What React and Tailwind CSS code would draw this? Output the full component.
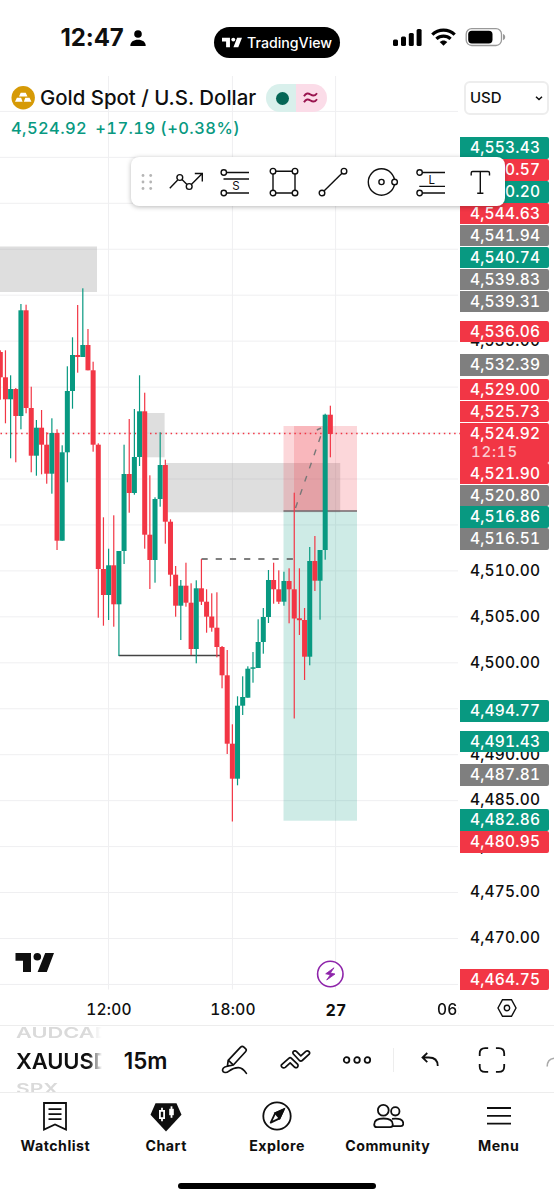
const GREEN = '#089981';
const RED = '#f23645';

// [bodyTop, bodyBottom, high, low, direction]
const candles = [
  [352, 377.3, 350.3, 399.7, 'd'],
  [377.3, 399.3, 350.3, 423.3, 'd'],
  [389, 399.3, 375.3, 458.3, 'u'],
  [389, 416, 388, 462.3, 'd'],
  [310.3, 416, 304, 429.3, 'u'],
  [310.3, 408, 304.7, 413.3, 'd'],
  [408, 455.7, 386.7, 472.3, 'd'],
  [427.7, 455.7, 420, 475.7, 'u'],
  [427.7, 444.7, 410, 474.3, 'd'],
  [444.7, 473.7, 432.3, 483.7, 'd'],
  [433, 473.7, 418.3, 493.7, 'u'],
  [433, 540.7, 429.3, 550, 'd'],
  [452.3, 540.7, 445.3, 540.7, 'u'],
  [391, 452.3, 366.3, 482.3, 'u'],
  [355, 391, 337.3, 408.7, 'u'],
  [355, 357, 305, 372.7, 'd'],
  [345, 357, 288.3, 357, 'u'],
  [345, 370.3, 329, 370.3, 'd'],
  [370.3, 444.7, 361.7, 451.7, 'd'],
  [444.7, 569, 443.3, 617.7, 'd'],
  [569, 595, 517.3, 625.7, 'd'],
  [565.3, 595, 548.7, 620, 'u'],
  [565.3, 604.3, 515.3, 626.7, 'd'],
  [551, 604.3, 551, 656, 'u'],
  [474, 551, 444.7, 564, 'u'],
  [474, 493, 419, 512.7, 'd'],
  [457, 493, 409, 494.7, 'u'],
  [411.3, 457, 375.3, 466, 'u'],
  [411.3, 534.7, 392.7, 548.7, 'd'],
  [534.7, 560, 475.3, 589, 'd'],
  [499, 560, 497.3, 582.7, 'u'],
  [465, 499, 432.3, 506.7, 'u'],
  [465, 521.7, 459.7, 543.7, 'd'],
  [521.7, 574.7, 519.3, 586.3, 'd'],
  [574.7, 605.7, 566, 616.7, 'd'],
  [585.7, 605.7, 580, 640, 'u'],
  [585.7, 602.7, 562.7, 606.7, 'd'],
  [602.7, 649, 583.3, 655, 'd'],
  [588.3, 649, 580.3, 663.3, 'u'],
  [588.3, 601.7, 559, 605, 'd'],
  [601.7, 616.7, 589.3, 632.7, 'd'],
  [616.5, 627.7, 593.3, 631.7, 'd'],
  [627.7, 647, 592.3, 657.3, 'd'],
  [647, 675.3, 646, 688.3, 'd'],
  [675.3, 743.7, 650, 754, 'd'],
  [743.7, 778.7, 724.3, 821.5, 'd'],
  [705.7, 778.7, 696.3, 785.3, 'u'],
  [697, 705.7, 676.3, 715, 'u'],
  [668.7, 697.7, 666.3, 697.7, 'u'],
  [667.3, 668.8, 652, 682.7, 'u'],
  [642, 668, 619.3, 668, 'u'],
  [617, 642, 608, 653.7, 'u'],
  [580, 617, 570, 623, 'u'],
  [580, 589.3, 562.7, 603.7, 'd'],
  [589.3, 601.7, 570.3, 604, 'd'],
  [581, 601.7, 571.7, 605.7, 'u'],
  [581, 589.3, 568.3, 623.3, 'd'],
  [589.3, 618.5, 492.7, 718.5, 'd'],
  [618.3, 620.2, 568.3, 635, 'd'],
  [620, 656.7, 608, 680, 'd'],
  [561, 656.7, 547, 665.3, 'u'],
  [561, 580.7, 536, 591, 'd'],
  [550, 580.7, 550, 619.7, 'u'],
  [414.7, 550, 413.7, 559.7, 'u'],
  [414.7, 434, 405.7, 457.3, 'd'],
];

const candleX = (i) => 108.6 + (i - 21) * 5.157;

const gridRows = Array.from({ length: 20 }, (_, i) => 111.4 + i * 45.95);

const scaleLabels = [
  ['4,535.00', 341],
  ['4,510.00', 570.5],
  ['4,505.00', 616.5],
  ['4,500.00', 662.5],
  ['4,490.00', 754.5],
  ['4,485.00', 800],
  ['4,480.00', 846],
  ['4,475.00', 892],
  ['4,470.00', 938],
];

const priceTags = [
  ['4,553.43', 148, 'bg-[#089981]'],
  ['4,550.57', 170, 'bg-[#f23645]'],
  ['4,550.20', 192, 'bg-[#089981]'],
  ['4,544.63', 213.8, 'bg-[#f23645]'],
  ['4,541.94', 235.7, 'bg-[#7f7f7f]'],
  ['4,540.74', 257.6, 'bg-[#089981]'],
  ['4,539.83', 279.5, 'bg-[#7f7f7f]'],
  ['4,539.31', 301.4, 'bg-[#7f7f7f]'],
  ['4,536.06', 331.5, 'bg-[#f23645]'],
  ['4,532.39', 365, 'bg-[#7f7f7f]'],
  ['4,529.00', 389.8, 'bg-[#f23645]'],
  ['4,525.73', 411.7, 'bg-[#f23645]'],
  ['4,521.90', 473.6, 'bg-[#f23645]'],
  ['4,520.80', 495.4, 'bg-[#7f7f7f]'],
  ['4,516.86', 517.3, 'bg-[#089981]'],
  ['4,516.51', 539.2, 'bg-[#7f7f7f]'],
  ['4,494.77', 711, 'bg-[#089981]'],
  ['4,491.43', 741.8, 'bg-[#089981]'],
  ['4,487.81', 775, 'bg-[#7f7f7f]'],
  ['4,482.86', 820.3, 'bg-[#089981]'],
  ['4,480.95', 842.2, 'bg-[#f23645]'],
  ['4,464.75', 979.5, 'bg-[#f23645]'],
];

// the chart area starts right below the status bar
const CHART_TOP = 76;

function StatusBar() {
  return (
    <header className="flex h-[76px] items-start">
      <div className="ml-[60.500px] mt-[22px] flex h-8 w-[153.500px] items-center gap-[6px]">
        <span className="text-[24px] font-bold leading-8 tracking-[-0.1px]">12:47</span>
        <svg className="mt-[-1px] h-4 w-4" viewBox="0 0 16 16">
          <circle cx="8" cy="4" r="3.800" />
          <path d="M.3 16c0-4.200 3.200-6.300 7.700-6.300s7.700 2.100 7.700 6.300z" />
        </svg>
      </div>
      <div className="mt-[27px] flex h-[31px] w-[126px] items-center rounded-full bg-black pl-2 text-white">
        <svg className="h-[11px] w-5" viewBox="0 0 39 19" fill="currentColor">
          <path d="M0 0h15.500v19H8V7.500H0zM29.500 0H39l-7.300 19h-9.400z" />
          <circle cx="22" cy="3.800" r="3.800" />
        </svg>
        <span className="ml-[5px] whitespace-nowrap text-[14.2px] font-medium">TradingView</span>
      </div>
      <div className="ml-[53px] mt-[27px] flex h-5 items-center gap-[9px]">
        <svg className="h-[18px] w-[29px]" viewBox="0 0 29 18">
          <rect x="0" y="11.500" width="5" height="6.500" rx="1.500" />
          <rect x="8" y="8.500" width="5" height="9.500" rx="1.500" />
          <rect x="15.800" y="5" width="5" height="13" rx="1.500" />
          <rect x="23.600" y="1" width="5" height="17" rx="1.500" />
        </svg>
        <svg className="h-[18px] w-[25px]" viewBox="0 0 25 18" fill="none" stroke="#000" strokeWidth="3.200">
          <path d="M1.300 6.700C7.500.6 17.500.6 23.700 6.700" />
          <path d="M5.400 10.900c4-3.800 10.200-3.800 14.200 0" />
          <path d="M8.700 14c2.200-2.100 5.400-2.100 7.600 0l-3.800 3.800z" fill="#000" stroke="none" />
        </svg>
        <svg className="h-[20px] w-[41px]" viewBox="0 0 41 20">
          <rect x="1.200" y="1.700" width="35.300" height="16.800" rx="5.500" fill="none" stroke="#999" strokeWidth="1.300" />
          <rect x="3.200" y="3.700" width="24.300" height="12.800" rx="3.700" />
          <path d="M38 7v6.200c1.600-.5 2.200-1.700 2.200-3.100S39.600 7.500 38 7z" fill="#999" />
        </svg>
      </div>
    </header>
  );
}

function Plot() {
  return (
    <svg className="block h-[914px] w-[460px]" viewBox="0 76 460 914">
      <g stroke="#efeff1" strokeWidth="1">
        {gridRows.map((y) => (
          <line key={y} x1="0" x2="458" y1={y} y2={y} />
        ))}
        {[108.5, 232.4, 335.6].map((x) => (
          <line key={x} x1={x} x2={x} y1="76" y2="989.500" />
        ))}
      </g>

      {/* supply zones */}
      <g fill="#808080" fillOpacity="0.26">
        <rect x="0" y="246.500" width="97" height="45.500" />
        <rect x="144" y="413" width="20.600" height="44.300" />
        <rect x="165.500" y="463" width="174.700" height="49.300" />
      </g>

      {/* short position */}
      <rect x="283.500" y="426" width="73.500" height="85" fill={RED} fillOpacity="0.2" />
      <rect x="294" y="426" width="31" height="85" fill={RED} fillOpacity="0.2" />
      <rect x="283.500" y="511" width="73.500" height="309.700" fill={GREEN} fillOpacity="0.2" />
      <line x1="283.500" x2="357" y1="511" y2="511" stroke="#75686c" strokeWidth="1.300" />
      <path d="M295.500 508L322.500 431" stroke="#777" strokeWidth="1.400" strokeDasharray="6 8" fill="none" />
      <path d="M316.800 430L321 428" stroke="#777" strokeWidth="1.400" />

      <line x1="118.800" x2="222" y1="655.500" y2="655.500" stroke="#444" strokeWidth="1.300" />
      <line x1="201.500" x2="294" y1="559" y2="559" stroke="#555" strokeWidth="1.500" strokeDasharray="6.200 8" />
      <line x1="0.500" x2="460" y1="433.500" y2="433.500" stroke={RED} strokeWidth="1.500" strokeDasharray="1.500 3.655" />

      {candles.map(([top, bottom, high, low, dir], i) => {
        const color = dir === 'u' ? GREEN : RED;
        return (
          <g key={i} fill={color}>
            <rect x={candleX(i) - 0.6} y={high} width="1.200" height={low - high} />
            <rect x={candleX(i) - 2.5} y={top} width="5" height={bottom - top} />
          </g>
        );
      })}

      <g fill="#0f0f0f">
        <path d="M15.500 953H31v19h-8v-11.300h-7.500zM45.200 953H54l-7.200 19h-9.200z" />
        <circle cx="37.300" cy="956.700" r="3.800" />
      </g>

      <circle cx="330.300" cy="974" r="12.700" fill="#fff" stroke="#8e24aa" strokeWidth="1.600" />
      <path d="M334 967.800L325.700 973.800l4.600 1-3.600 5.200 8.300-6-4.600-1z" fill="#8e24aa" stroke="#8e24aa" strokeWidth=".8" strokeLinejoin="round" />
    </svg>
  );
}

function PriceScale() {
  return (
    <div className="relative w-[94px] overflow-hidden text-[15.5px] font-medium tabular-nums leading-[22px] tracking-[0.2px]">
      <button className="absolute left-1 top-[5px] flex h-[34px] w-[85px] items-center justify-between rounded-md border-2 border-[#ededed] bg-white pl-1 pr-[4px] text-[15px] tracking-normal">
        USD
        <svg className="h-2 w-2" viewBox="0 0 8 8" fill="none" stroke="#0f0f0f" strokeWidth="1.500">
          <path d="M1 2.800l3 2.700 3-2.700" />
        </svg>
      </button>
      {scaleLabels.map(([text, y]) => (
        <div key={text} className="absolute left-[10px] whitespace-nowrap" style={{ top: y - 11 - CHART_TOP }}>
          {text}
        </div>
      ))}
      {priceTags.map(([text, y, bg]) => (
        <div
          key={text}
          className={`absolute left-0 h-[21.500px] w-[88.500px] rounded-r-[2px] pl-[10px] text-white ${bg}`}
          style={{ top: y - 10.9 - CHART_TOP }}
        >
          {text}
        </div>
      ))}
      <div className="absolute left-0 top-[346.600px] h-[40px] w-[88.500px] rounded-r-[2px] bg-[#f23645] pl-[10px] text-white">
        <div>4,524.92</div>
        <div className="-mt-[4px] pl-[1px] text-[15px] tracking-[0.8px] text-white/75">12:15</div>
      </div>
    </div>
  );
}

function Legend() {
  return (
    <div className="absolute left-[11px] top-[8px]">
      <div className="flex h-[28px] items-center">
        <svg className="h-6 w-6" viewBox="0 0 24 24">
          <circle cx="12.200" cy="11.800" r="11.700" fill="#d69a06" />
          <path d="M9.700 6.700h5l1.800 3.800H8zM5.900 11.800h4.200l1.500 4H4zM14.300 11.800h4.200l1.900 4h-7.600z" fill="#fff" />
        </svg>
        <h1 className="ml-[5px] w-[226px] whitespace-nowrap text-[20.4px] font-medium leading-7">
          Gold Spot / U.S. Dollar
        </h1>
        <div className="flex h-7 w-[61px] overflow-hidden rounded-full">
          <div className="flex w-[30px] items-center justify-center bg-[#d9f0ec]">
            <span className="ml-[2px] h-[13px] w-[13px] rounded-full bg-[#056656]" />
          </div>
          <div className="flex w-[31px] items-center justify-center bg-[#fbdce8]">
            <svg className="-ml-[2px] h-3 w-[15px]" viewBox="0 0 15 12" fill="none" stroke="#99154f" strokeWidth="1.900">
              <path d="M1 4.300C3 .8 5.200 1 7.500 2.500S12 4.200 14 1.200" />
              <path d="M1 10.300c2-3.500 4.200-3.300 6.500-1.800s4.500 1.700 6.500-1.300" />
            </svg>
          </div>
        </div>
      </div>
      <div className="mt-[5px] flex gap-2 whitespace-nowrap text-[16.5px] font-medium tabular-nums leading-[22px] tracking-[0.4px] text-[#089981]">
        <span>4,524.92</span>
        <span>+17.19 (+0.38%)</span>
      </div>
    </div>
  );
}

function Tool({ children }) {
  return (
    <button className="flex w-[49px] items-center justify-center">
      <svg className="-ml-px h-[34px] w-[34px]" viewBox="0 0 34 34" fill="none" stroke="#0f0f0f" strokeWidth="1.400">
        {children}
      </svg>
    </button>
  );
}

function DrawingToolbar() {
  return (
    <div className="absolute left-[131px] top-[81px] flex h-[49px] w-[374px] rounded-lg bg-white shadow-[0_1px_5px_rgba(0,0,0,0.28)]">
      <div className="flex w-[31px] items-center justify-center">
        <svg className="h-4 w-3" viewBox="0 0 12 16" fill="#b5b5b5">
          {[1.5, 8, 14.5].map((y) => (
            <g key={y}>
              <circle cx="2" cy={y} r="1.400" />
              <circle cx="9.700" cy={y} r="1.400" />
            </g>
          ))}
        </svg>
      </div>
      <Tool>
        <path d="M.8 23.200l7.900-8.300M13 14.500l5 5M22.300 19.400L33 8.800M25.800 8.500h7.500V16.500" />
        <circle cx="10.800" cy="12.500" r="2.900" />
        <circle cx="20.200" cy="21.500" r="2.900" />
      </Tool>
      <Tool>
        <circle cx="5.800" cy="7.500" r="2.700" />
        <circle cx="5.800" cy="28" r="2.700" />
        <path d="M8.500 7.500H31M5.500 14H31M8.500 28H31" />
        <text x="18" y="25" textAnchor="middle" fontSize="11.500" fill="#0f0f0f" stroke="none">S</text>
      </Tool>
      <Tool>
        <circle cx="6" cy="6.200" r="2.800" />
        <circle cx="28" cy="6.200" r="2.800" />
        <circle cx="6" cy="28" r="2.800" />
        <circle cx="28" cy="28" r="2.800" />
        <path d="M8.800 6.200h16.400M8.800 28h16.400M6 9v16.200M28 9v16.200" />
      </Tool>
      <Tool>
        <circle cx="6" cy="28" r="2.800" />
        <circle cx="28" cy="6.200" r="2.800" />
        <path d="M8 26L26 8.200" />
      </Tool>
      <Tool>
        <circle cx="16.500" cy="17" r="13.200" />
        <circle cx="16.500" cy="17" r="2.600" />
        <circle cx="29.600" cy="17" r="2.800" fill="#fff" />
      </Tool>
      <Tool>
        <circle cx="5.600" cy="7.500" r="2.700" />
        <circle cx="5.600" cy="28" r="2.700" />
        <path d="M8.300 7.500H31M5.300 21.400H31M8.300 28H31" />
        <text x="17.800" y="18.700" textAnchor="middle" fontSize="11.500" fill="#0f0f0f" stroke="none">L</text>
      </Tool>
      <Tool>
        <path d="M8.200 10.500V8q0-1.500 1.500-1.500h15.300q1.500 0 1.500 1.500v2.500M17.300 6.500v21.800M14.200 28.300h6.200" />
      </Tool>
    </div>
  );
}

function TimeScale() {
  return (
    <div className="flex h-9 items-center border-b border-[#ededed] text-[15.5px] font-medium tabular-nums leading-5 tracking-[0.2px]">
      <span className="ml-[69px] mt-[4px] w-20 text-center">12:00</span>
      <span className="ml-[44px] mt-[4px] w-20 text-center">18:00</span>
      <span className="ml-[23px] mt-[4px] w-20 text-center text-[16px] font-bold">27</span>
      <span className="ml-[61px] mt-[4px] w-[22px] overflow-hidden whitespace-nowrap [mask-image:linear-gradient(to_right,#000_88%,transparent_100%)]">06:00</span>
      <svg className="ml-[38px] h-5 w-5" viewBox="0 0 20 20" fill="none" stroke="#0f0f0f" strokeWidth="1.400">
        <path d="M5.500 1.700h9L19 10l-4.500 8.300h-9L1 10z" />
        <circle cx="10" cy="10" r="2.700" />
      </svg>
    </div>
  );
}

function SymbolBar() {
  return (
    <div className="flex h-[67px] items-center overflow-hidden border-b border-[#ededed] pt-px">
      <div className="ml-4 flex h-[67px] w-[86px] flex-col justify-center overflow-hidden whitespace-nowrap pt-[2px] font-semibold [mask-image:linear-gradient(to_right,#000_84%,transparent_100%)]">
        <div className="h-[18px] origin-left scale-x-[1.12] scale-y-75 text-[19.500px] leading-[18px] text-[#dadada]">AUDCAD</div>
        <div className="h-[38px] text-[22px] leading-[38px] tracking-[-0.1px]">XAUUSD</div>
        <div className="h-[18px] origin-left scale-x-[1.08] scale-y-75 text-[19.500px] leading-[18px] text-[#dadada]">SPX</div>
      </div>
      <div className="ml-[22px] mt-[2px] w-[50px] text-[22.4px] font-semibold">15m</div>
      <svg className="ml-[47px] h-[30px] w-[28px]" viewBox="0 0 28 30" fill="none" stroke="#0f0f0f" strokeWidth="1.700" strokeLinejoin="round" strokeLinecap="round">
        <path d="M7.200 15.300L19.700 2q1.600-1.500 3.300 0l1.600 1.500q1.600 1.500 0 3.200L12.400 20l-5.900 1.200zM7.500 15.500l4.700 4.300" />
        <path d="M6.500 21.300C3 22 1.300 23.500 1.600 25.600c.4 2.300 3.600 2.700 6.400.6 3-2.300 5.500-3.700 9.500-3.600 4 .1 6 2.800 8 5.800" />
      </svg>
      <svg className="ml-[32px] h-[20px] w-[32px]" viewBox="0 0 32 20" fill="none" stroke="#0f0f0f" strokeWidth="1.700" strokeLinejoin="round">
        <path d="M1.700 14.600L8.800 8.300q1.400-1.200 2.700 0l6.300 6.100q.7 1.700-.3 2.700-1.300 1.200-2.700.2L10.200 13l-4.900 4.400q-1.700 1.200-3.300-.2-1.300-1.300-.3-2.600z" />
        <path d="M13.200 3.700q-.7-1.600.5-2.500 1.300-.9 2.700.2l4.500 4.400 5-4.400q1.700-1.200 3.200.2 1.200 1.400.2 2.600l-7 6.300q-1.400 1.200-2.800 0z" />
      </svg>
      <svg className="ml-[30px] h-2 w-[30px]" viewBox="0 0 30 8" fill="none" stroke="#0f0f0f" strokeWidth="1.800">
        <circle cx="4.600" cy="4" r="2.800" />
        <circle cx="15.100" cy="4" r="2.800" />
        <circle cx="25.500" cy="4" r="2.800" />
      </svg>
      <div className="ml-[21px] h-6 w-px bg-[#ededed]" />
      <svg className="ml-[27px] h-[15px] w-[19px]" viewBox="0 0 19 15" fill="none" stroke="#0f0f0f" strokeWidth="1.800">
        <path d="M6.300 1L1.500 5.500l4.800 4.700M1.500 5.500h6.300c5.700 0 9 3 9 8.500" />
      </svg>
      <svg className="ml-[38px] h-[28px] w-[28px]" viewBox="0 0 28 28" fill="none" stroke="#0f0f0f" strokeWidth="1.800">
        <path d="M1.700 10V7.500q0-5.500 5.500-5.500h3M18 2h2.800q5.500 0 5.500 5.500V10M26.300 18v2.500q0 5.500-5.500 5.500H18M10.200 26h-3q-5.500 0-5.500-5.500V18" />
      </svg>
      <svg className="ml-[40px] mt-[5px] h-[10px] w-2 shrink-0" viewBox="0 0 8 10" fill="none" stroke="#aaa" strokeWidth="1.600">
        <path d="M1.200 9.500C1.200 5 3.500 2 8 1.300" />
      </svg>
    </div>
  );
}

const tabs = [
  {
    name: 'Watchlist',
    icon: (
      <>
        <path d="M5 3h22v26.500l-11-5-11 5z" />
        <path d="M9.500 9.200h13M9.500 14.200h13M9.500 19.200h13" />
      </>
    ),
  },
  {
    name: 'Chart',
    icon: (
      <>
        <path d="M5.500 3.200h21l5 11.500L16 31.500.5 14.700z" fill="#0f0f0f" stroke="none" />
        <path d="M12 7.800v3M12 18.200v3M9.900 10.800h4.200v7.400H9.900z" stroke="#fff" />
        <path d="M21.500 6.300v11.500" stroke="#fff" />
        <path d="M19.200 8.800h4.600v6.400h-4.600z" fill="#fff" stroke="none" />
      </>
    ),
  },
  {
    name: 'Explore',
    icon: (
      <>
        <circle cx="16" cy="16" r="13.700" />
        <path d="M22.800 9.300l-8.600 3.900-4.500 9.400 8.900-4.200z" strokeLinejoin="round" />
        <path d="M22.800 9.300l-8.600 3.900 4.400 5.200z" fill="#0f0f0f" />
      </>
    ),
  },
  {
    name: 'Community',
    icon: (
      <>
        <circle cx="11.300" cy="10.300" r="5.400" />
        <circle cx="23.300" cy="11.300" r="4.200" />
        <path d="M2.200 24.500c0-4.200 3-6 9.300-6s9.300 1.800 9.300 6q0 2.700-2.500 2.700H4.700q-2.500 0-2.500-2.700z" />
        <path d="M20 18.800c7.500-.9 11.300 1 11.300 4.700 0 1.800-.8 2.700-2.400 2.700h-8" />
      </>
    ),
  },
  { name: 'Menu', icon: <path d="M4 8h24M4 15.900h24M4 23.700h24" /> },
];

function TabBar() {
  return (
    <nav className="grid h-[90px] grid-cols-5">
      {tabs.map((tab) => (
        <button key={tab.name} className="flex flex-col items-center pt-[7px]">
          <svg className="h-8 w-8" viewBox="0 0 32 32" fill="none" stroke="#0f0f0f" strokeWidth="1.800">
            {tab.icon}
          </svg>
          <span className="mt-[4px] text-[14.2px] font-bold leading-5 tracking-[0.5px]">{tab.name}</span>
        </button>
      ))}
    </nav>
  );
}

export default function App() {
  return (
    <div className="flex h-[1200px] w-[554px] flex-col overflow-hidden bg-white font-['Inter',sans-serif] text-[#0f0f0f]">
      <StatusBar />
      <main className="relative flex h-[914px]">
        <Plot />
        <PriceScale />
        <Legend />
        <DrawingToolbar />
      </main>
      <TimeScale />
      <SymbolBar />
      <TabBar />
      <div className="mx-auto h-[6px] w-[198px] rounded-full bg-black" />
    </div>
  );
}
